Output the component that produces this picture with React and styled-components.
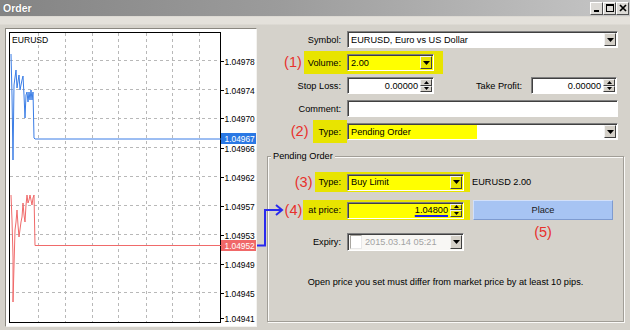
import React from 'react';
import styled, { createGlobalStyle } from 'styled-components';

const FONT = `"Liberation Sans", Arial, sans-serif`;
const BG = '#d5d2cb';
const Y_GRAY = '#e8e400';
const Y_WHITE = '#ffff00';

const Global = createGlobalStyle`
  *, *::before, *::after { box-sizing: border-box; }
  html, body { margin: 0; padding: 0; background: ${BG}; }
  body { width: 630px; height: 330px; overflow: hidden; }
`;

const Window = styled.div`
  position: relative;
  width: 630px;
  height: 330px;
  background: ${BG};
  font-family: ${FONT};
  font-size: 9.2px;
  color: #000;
  display: flex;
  flex-direction: column;
  overflow: hidden;
`;

const TitleBar = styled.div`
  height: 16px;
  flex: none;
  display: flex;
  align-items: center;
  justify-content: space-between;
  padding: 0 1px 0 3px;
  background: linear-gradient(to right, #848484 0%, #9c9c9c 45%, #c6c6c6 100%);
`;

const Title = styled.span`
  color: #fff;
  font-weight: bold;
  font-size: 10.5px;
  text-shadow: 0 0 1px #555;
`;

const CtlGroup = styled.div`
  display: flex;
`;

const CtlBtn = styled.div`
  width: 13px;
  height: 13px;
  background: #dcdad6;
  border: 1px solid;
  border-color: #fff #505050 #505050 #fff;
  display: flex;
  align-items: center;
  justify-content: center;
`;

const Body = styled.div`
  flex: 1;
  min-height: 0;
  display: flex;
  gap: 5px;
  padding: 12px 6px 3px 5px;
  background: linear-gradient(${BG} 0, #e4e1db 1px, #e4e1db 8px, ${BG} 9px);
`;

const ChartBox = styled.div`
  width: 252px;
  height: 299px;
  flex: none;
  background: #fff;
  border: 1px solid;
  border-color: #8a8780 #f4f3f0 #f4f3f0 #8a8780;
  svg { display: block; overflow: visible; }
`;

const Form = styled.div`
  flex: 1;
  min-width: 0;
  display: flex;
  flex-direction: column;
`;

const TopRows = styled.div`
  display: flex;
  flex-direction: column;
  padding-right: 3px;
`;

const Row = styled.div`
  display: flex;
  align-items: center;
  height: ${p => p.$h || 23}px;
`;

const LabelCell = styled.div`
  width: ${p => p.$w}px;
  flex: none;
  align-self: stretch;
  display: flex;
  justify-content: flex-end;
  align-items: center;
`;

const Annot = styled.span`
  color: #e8302c;
  font-size: 14.5px;
  line-height: 1;
  margin-right: ${p => p.$gap ?? 2}px;
`;

const Label = styled.div`
  align-self: stretch;
  display: flex;
  align-items: center;
  white-space: nowrap;
  padding: 0 3px 0 ${p => p.$pl ?? 0}px;
  background: ${p => (p.$hl ? Y_GRAY : 'transparent')};
`;

const SideLabel = styled.div`
  flex: 1;
  text-align: right;
  white-space: nowrap;
  padding-right: 6px;
`;

const FieldWrap = styled.div`
  align-self: stretch;
  display: flex;
  align-items: center;
  flex: ${p => (p.$grow ? 1 : 'none')};
  min-width: 0;
  padding: 0 ${p => p.$pr ?? 3}px 0 3px;
  background: ${p =>
    p.$hl === 'left'
      ? `linear-gradient(to right, ${Y_GRAY} 3px, transparent 3px)`
      : p.$hl
      ? Y_GRAY
      : 'transparent'};
`;

const Field = styled.div`
  height: ${p => p.$h || 17}px;
  width: ${p => (p.$w ? `${p.$w}px` : 'auto')};
  flex: ${p => (p.$w ? 'none' : 1)};
  display: flex;
  align-items: stretch;
  padding: 1px;
  background: ${p => p.$bg || '#fff'};
  border: 1px solid;
  border-color: #808080 #fff #fff #808080;
  box-shadow: inset 1px 1px 0 #404040;
`;

const FieldText = styled.div`
  flex: 1;
  min-width: 0;
  display: flex;
  align-items: center;
  justify-content: ${p => (p.$right ? 'flex-end' : 'flex-start')};
  padding: 0 ${p => p.$pr ?? 3}px 0 ${p => p.$pl ?? 2}px;
  color: ${p => p.$c || '#000'};
  white-space: nowrap;
  overflow: hidden;
`;

const DropBtn = styled.div`
  width: 12px;
  flex: none;
  background: ${p => (p.$hl ? Y_GRAY : '#d4d0c8')};
  border: 1px solid;
  border-color: #f2f2f2 #404040 #404040 #f2f2f2;
  display: flex;
  align-items: center;
  justify-content: center;
`;

const SpinBtns = styled.div`
  width: 12px;
  flex: none;
  display: flex;
  flex-direction: column;
`;

const SpinHalf = styled.div`
  flex: 1;
  background: ${p => (p.$hl ? Y_GRAY : '#d4d0c8')};
  border: 1px solid;
  border-color: #f2f2f2 #404040 #404040 #f2f2f2;
  display: flex;
  align-items: center;
  justify-content: center;
`;

const Price = styled.span`
  text-decoration: underline;
  text-decoration-color: #1f1fe0;
  text-decoration-thickness: 2px;
  text-underline-offset: 2px;
`;

const Check = styled.div`
  width: 12px;
  flex: none;
  margin: 0 3px 0 1px;
  background: #fff;
  border: 1px solid;
  border-color: #a8a6a0 #e8e8e8 #e8e8e8 #a8a6a0;
`;

const Group = styled.fieldset`
  flex: 1;
  min-width: 0;
  margin: 8px 0 5px 5px;
  padding: 0;
  border: 1px solid #a19e97;
  box-shadow: 1px 1px 0 #fbfaf8, inset 1px 1px 0 #fbfaf8;
`;

const Legend = styled.legend`
  margin-left: 3px;
  padding: 0 2px;
  line-height: 11px;
  background: ${BG};
`;

const PendGrid = styled.div`
  display: grid;
  grid-template-columns: 202px 140px;
  grid-template-rows: 20px 20px 28px;
  column-gap: 3px;
  row-gap: 8px;
  margin-top: 10px;
`;

const SideText = styled.div`
  display: flex;
  align-items: center;
  margin-left: -1px;
  white-space: nowrap;
`;

const PlaceBtn = styled.div`
  height: 20px;
  display: flex;
  align-items: center;
  justify-content: center;
  background: #a7c4f3;
  border: 1px solid;
  border-color: #d2e0fa #7e9bd0 #7e9bd0 #d2e0fa;
  color: #1a1a1a;
`;

const AnnotCell = styled.div`
  display: flex;
  justify-content: center;
  align-items: flex-start;
  margin-top: -3px;
`;

const Info = styled.div`
  margin-top: 21px;
  text-align: center;
  line-height: 11px;
  white-space: nowrap;
`;

const Overlay = styled.svg`
  position: absolute;
  left: 0;
  top: 0;
  pointer-events: none;
`;

const Tri = ({ up, w = 7, h = 4 }) => (
  <svg width={w} height={h} viewBox={`0 0 ${w} ${h}`}>
    <path d={up ? `M0 ${h}L${w / 2} 0L${w} ${h}Z` : `M0 0L${w} 0L${w / 2} ${h}Z`} fill="#000" />
  </svg>
);

const Select = ({ w, bg, hl, children }) => (
  <Field $w={w} $bg={bg}>
    <FieldText>{children}</FieldText>
    <DropBtn $hl={hl}>
      <Tri />
    </DropBtn>
  </Field>
);

const Spin = ({ w, bg, hl, children }) => (
  <Field $w={w} $bg={bg}>
    <FieldText $right $pr={2}>{children}</FieldText>
    <SpinBtns>
      <SpinHalf $hl={hl}>
        <Tri up w={5} h={3} />
      </SpinHalf>
      <SpinHalf $hl={hl}>
        <Tri w={5} h={3} />
      </SpinHalf>
    </SpinBtns>
  </Field>
);

const prices = [
  ['1.04978', 61],
  ['1.04974', 90],
  ['1.04970', 118],
  ['1.04966', 148],
  ['1.04962', 177],
  ['1.04957', 206],
  ['1.04953', 235],
  ['1.04949', 264],
  ['1.04945', 293],
  ['1.04941', 318],
];
const hGrid = [60, 89, 118, 147, 176, 205, 234, 263, 292];
const vGrid = [38, 65, 92, 118, 146, 172, 199];

const bluePts =
  '11,54 12,95 13,160 14,85 16,70 17,88 19,75 20,90 22,80 23,76 24,95 25,118 26,95 27,92 28,102 29,92 30,100 31,90 32,100 33,92 34,138 35,139 221,139';
const redPts =
  '11,195 12,220 13,257 13,302 15,230 16,222 17,210 18,225 19,237 21,222 22,217 23,203 24,215 25,222 26,205 27,195 28,203 29,200 30,195 31,200 32,205 33,198 34,195 35,245.5 221,245.5';

const AXIS_FONT = 8.4;

const Chart = () => (
  <ChartBox>
    <svg width="250" height="297" viewBox="0 0 250 297" fontFamily={FONT}>
      <g transform="translate(-6,-29)">
        {hGrid.map(y => (
          <line key={y} x1="10" x2="220" y1={y + 0.5} y2={y + 0.5} stroke="#b8b8b8" strokeDasharray="3 3" />
        ))}
        {vGrid.map(x => (
          <line key={x} x1={x + 0.5} x2={x + 0.5} y1="33" y2="322" stroke="#b8b8b8" strokeDasharray="3 3" />
        ))}
        <rect x="9.5" y="32.5" width="211" height="290" fill="none" stroke="#000" />
        <text x="12" y="42.5" fontSize="8.6">EURUSD</text>
        {prices.map(([t, y]) => (
          <g key={t}>
            <line x1="220" x2="224" y1={y + 0.5} y2={y + 0.5} stroke="#000" />
            <text x="224.5" y={y + 3.5} fontSize={AXIS_FONT}>
              {t}
            </text>
          </g>
        ))}
        <polyline points={bluePts} fill="none" stroke="#3a7de6" strokeWidth="1" />
        <polyline points={redPts} fill="none" stroke="#f06a6a" strokeWidth="1" />
        <rect x="221" y="133" width="35" height="11" fill="#2a78e4" />
        <text x="224.5" y="142" fontSize={AXIS_FONT} fill="#fff">1.04967</text>
        <rect x="221" y="240" width="35" height="11" fill="#f06868" />
        <text x="224.5" y="249" fontSize={AXIS_FONT} fill="#fff">1.04952</text>
      </g>
    </svg>
  </ChartBox>
);

export default function App() {
  return (
    <>
      <Global />
      <Window>
        <TitleBar>
          <Title>Order</Title>
          <CtlGroup>
            <CtlBtn>
              <svg width="8" height="8" viewBox="0 0 8 8"><rect x="1" y="6" width="5" height="2" fill="#000" /></svg>
            </CtlBtn>
            <CtlBtn>
              <svg width="8" height="8" viewBox="0 0 8 8">
                <rect x="0.5" y="0.5" width="7" height="7" fill="none" stroke="#000" />
                <line x1="0" y1="1.5" x2="8" y2="1.5" stroke="#000" />
              </svg>
            </CtlBtn>
            <CtlBtn>
              <svg width="8" height="8" viewBox="0 0 8 8"><path d="M1 1L7 7M7 1L1 7" stroke="#000" strokeWidth="1.7" /></svg>
            </CtlBtn>
          </CtlGroup>
        </TitleBar>
        <Body>
          <Chart />
          <Form>
            <TopRows>
              <Row>
                <LabelCell $w={82}>
                  <Label>Symbol:</Label>
                </LabelCell>
                <FieldWrap $grow>
                  <Select>EURUSD, Euro vs US Dollar</Select>
                </FieldWrap>
              </Row>
              <Row>
                <LabelCell $w={82}>
                  <Annot $gap={2}>(1)</Annot>
                  <Label $hl $pl={4}>Volume:</Label>
                </LabelCell>
                <FieldWrap $hl $pr={9}>
                  <Select w={87} bg={Y_WHITE} hl>2.00</Select>
                </FieldWrap>
              </Row>
              <Row>
                <LabelCell $w={82}>
                  <Label>Stop Loss:</Label>
                </LabelCell>
                <FieldWrap>
                  <Spin w={87}>0.00000</Spin>
                </FieldWrap>
                <SideLabel>Take Profit:</SideLabel>
                <FieldWrap $pr={4}>
                  <Spin w={86}>0.00000</Spin>
                </FieldWrap>
              </Row>
              <Row>
                <LabelCell $w={82}>
                  <Label>Comment:</Label>
                </LabelCell>
                <FieldWrap $grow>
                  <Field />
                </FieldWrap>
              </Row>
              <Row>
                <LabelCell $w={82}>
                  <Annot $gap={4}>(2)</Annot>
                  <Label $hl $pl={6}>Type:</Label>
                </LabelCell>
                <FieldWrap $grow $hl="left">
                  <Select bg={`linear-gradient(to right, ${Y_WHITE} 0, ${Y_WHITE} 129px, #fff 129px)`}>Pending Order</Select>
                </FieldWrap>
              </Row>
            </TopRows>
            <Group>
              <Legend>Pending Order</Legend>
              <PendGrid>
                <Row $h={20}>
                  <LabelCell $w={76}>
                    <Annot $gap={2}>(3)</Annot>
                    <Label $hl $pl={4}>Type:</Label>
                  </LabelCell>
                  <FieldWrap $hl $pr={6}>
                    <Select w={117} bg={Y_WHITE} hl>Buy Limit</Select>
                  </FieldWrap>
                </Row>
                <SideText>EURUSD 2.00</SideText>
                <Row $h={20}>
                  <LabelCell $w={76}>
                    <Annot $gap={1}>(4)</Annot>
                    <Label $hl $pl={5}>at price:</Label>
                  </LabelCell>
                  <FieldWrap $hl $pr={6}>
                    <Spin w={117} bg={Y_WHITE} hl>
                      <Price>1.04800</Price>
                    </Spin>
                  </FieldWrap>
                </Row>
                <PlaceBtn>Place</PlaceBtn>
                <Row $h={28}>
                  <LabelCell $w={76}>
                    <Label>Expiry:</Label>
                  </LabelCell>
                  <FieldWrap $pr={6}>
                    <Field $w={117} $h={18} $bg="#f8f7f4">
                      <Check />
                      <FieldText $c="#a3a3a3" $pl={0}>2015.03.14 05:21</FieldText>
                      <DropBtn>
                        <Tri />
                      </DropBtn>
                    </Field>
                  </FieldWrap>
                </Row>
                <AnnotCell>
                  <Annot $gap={0}>(5)</Annot>
                </AnnotCell>
              </PendGrid>
              <Info>Open price you set must differ from market price by at least 10 pips.</Info>
            </Group>
          </Form>
        </Body>
        <Overlay width="630" height="330" viewBox="0 0 630 330">
          <path d="M257 245.5 H265 V210 H281" fill="none" stroke="#2a2aee" strokeWidth="2" />
          <polyline points="276,205 282,210 276,215" fill="none" stroke="#2a2aee" strokeWidth="2" />
        </Overlay>
      </Window>
    </>
  );
}
